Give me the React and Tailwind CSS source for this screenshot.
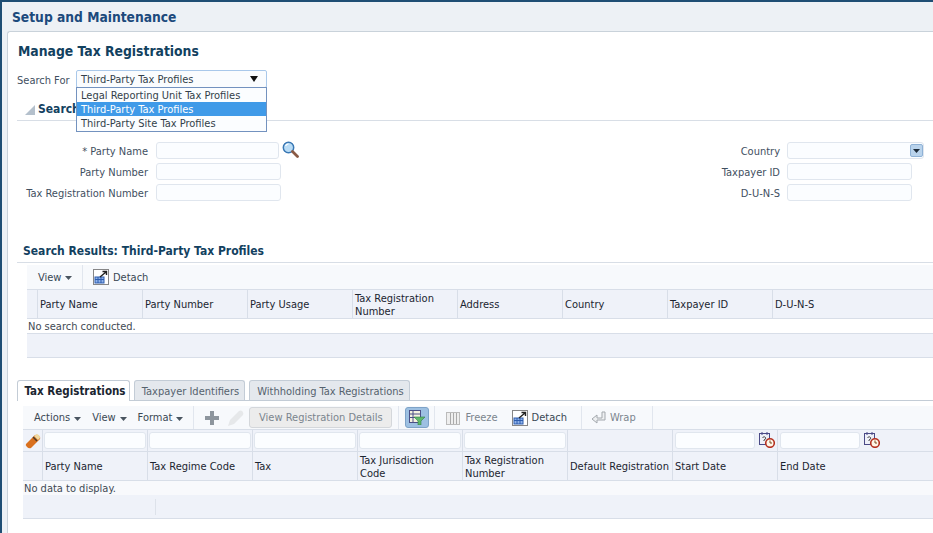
const resultColumns = ["Party Name", "Party Number", "Party Usage", "Tax Registration Number", "Address", "Country", "Taxpayer ID", "D-U-N-S"];
const registrationColumns = ["Party Name", "Tax Regime Code", "Tax", "Tax Jurisdiction Code", "Tax Registration Number", "Default Registration", "Start Date", "End Date"];
const wrappedColumns = ["Tax Registration Number", "Tax Jurisdiction Code"];

const Caret = () => (
  <svg width="7" height="4" viewBox="0 0 7 4" className="ml-[4px] mt-[2px]">
    <path d="M0 0h7L3.5 4z" fill="#4a5560" />
  </svg>
);

const Separator = () => <div className="h-[23px] w-px bg-[#e1e6ee]" />;

const DetachIcon = () => (
  <svg width="16" height="16" viewBox="0 0 16 16" className="shrink-0">
    <rect x="0.5" y="0.5" width="15" height="15" fill="#fff" stroke="#111" strokeDasharray="1 1" />
    <rect x="2" y="8" width="9" height="6" fill="#8fb2ea" stroke="#2c5cae" />
    <path d="M2 10.5h9M5 8v6M8 8v6" stroke="#2c5cae" />
    <path d="M7 8l6-5M9.5 2.5H13.5V6" fill="none" stroke="#222" strokeWidth="1.4" />
  </svg>
);

const CalendarIcon = () => (
  <svg width="16" height="16" viewBox="0 0 16 16" className="shrink-0">
    <rect x="0.5" y="1.5" width="10" height="11" fill="#eef0f8" stroke="#4a4a86" />
    <path d="M3 0v3M8 0v3" stroke="#4a4a86" />
    <path d="M3.5 5.5q2-1.5 3 0t-1.5 2.5v1" fill="none" stroke="#444" />
    <circle cx="11" cy="11" r="4.3" fill="#fff6e8" stroke="#b5301f" strokeWidth="1.6" />
    <path d="M11 8.5V11h2" fill="none" stroke="#7a4a20" />
  </svg>
);

const Input = ({ className }) => (
  <div className={`h-[17px] rounded-[3px] border border-[#e0e6ee] bg-[#fbfdff] ${className}`} />
);

const FormRow = ({ label, inputClass }) => (
  <div className="flex h-[17px] items-center">
    <div className="w-[140px] pt-[2px] text-right leading-[15px]">{label}</div>
    <Input className={`ml-[8px] ${inputClass}`} />
  </div>
);

const HeaderRow = ({ columns, lead, height }) => (
  <div className={`grid ${lead} ${height} border-y border-[#d8dee8] bg-[#eff2f9] text-[#1b2530]`}>
    <div className="border-r border-[#d8dee8]" />
    {columns.map((c, i) => (
      <div
        key={c}
        className={`flex items-center px-[2px] leading-[13px] ${wrappedColumns.includes(c) ? "pt-[2px]" : ""} ${i < columns.length - 1 ? "border-r border-[#d8dee8]" : ""}`}
      >
        <span className={wrappedColumns.includes(c) ? "max-w-[92px]" : ""}>{c}</span>
      </div>
    ))}
  </div>
);

export default function App() {
  return (
    <div className="h-[533px] w-[933px] overflow-hidden border-t-2 border-l-2 border-[#1f4e74] bg-[#edf1f5] text-[11px] text-[#3f4f5f] [font-family:'DejaVu_Sans_Condensed','DejaVu_Sans',sans-serif] [font-stretch:condensed]">
      <div className="flex h-[29px] items-center pt-[2px] pl-[10px] text-[13.7px] font-bold text-[#1c4a7c]">Setup and Maintenance</div>

      <div className="ml-[5px] h-[510px] overflow-hidden rounded-tl-[3px] border-t border-l border-[#c9d2da] bg-white">
        <h1 className="mt-[9px] h-[20px] pl-[10px] text-[13.8px] leading-[20px] font-bold text-[#12415f]">Manage Tax Registrations</h1>

        <div className="relative mt-[9px] flex h-[18px] items-center pl-[9px]">
          <span className="w-[59px] pt-[2px] leading-[15px]">Search For</span>
          <div className="flex h-[18px] w-[191px] items-center justify-between rounded-[2px] border border-[#a9c8ea] bg-[#fafcfe] pr-[8px] pl-[4px] text-[#333f4a]">
            <span className="pt-[2px] leading-[14px]">Third-Party Tax Profiles</span>
            <svg width="8" height="6" viewBox="0 0 8 6"><path d="M0 0h8L4 6z" fill="#111" /></svg>
          </div>
          <div className="absolute top-[17px] left-[68px] z-10 h-[45px] w-[191px] border border-[#7392bf] bg-[#fbfdff] text-[#333f4a]">
            <div className="h-[14px] pl-[4px] leading-[16px]">Legal Reporting Unit Tax Profiles</div>
            <div className="h-[14px] bg-[#3f9ae8] pl-[4px] leading-[16px] text-white">Third-Party Tax Profiles</div>
            <div className="h-[14px] pl-[4px] leading-[16px]">Third-Party Site Tax Profiles</div>
          </div>
        </div>

        <div className="ml-[9px] flex h-[33px] items-end border-b border-[#d8dee6] pb-[3px] pl-[8px]">
          <svg width="10" height="10" viewBox="0 0 10 10" className="mb-[2px]"><path d="M10 0v10H0z" fill="#b4c0cc" /></svg>
          <span className="ml-[3px] text-[12px] leading-[15px] font-bold text-[#12415f]">Search</span>
        </div>

        <div className="mt-[21px] flex h-[59px]">
          <div className="flex flex-col gap-[4px]">
            <div className="flex h-[17px] items-center">
              <div className="w-[140px] pt-[2px] text-right leading-[15px]">* Party Name</div>
              <Input className="ml-[8px] w-[123px]" />
              <svg width="17" height="17" viewBox="0 0 17 17" className="ml-[3px] -mt-[3px]">
                <circle cx="6.5" cy="6.5" r="5.2" fill="#b9dcf6" stroke="#3a78b4" strokeWidth="1.5" />
                <path d="M3.5 5q1-2 3-2" fill="none" stroke="#fff" strokeWidth="1.2" />
                <path d="M10.5 10.5l5 5" stroke="#8a5a44" strokeWidth="2.8" strokeLinecap="round" />
              </svg>
            </div>
            <FormRow label="Party Number" inputClass="w-[125px]" />
            <FormRow label="Tax Registration Number" inputClass="w-[125px]" />
          </div>
          <div className="ml-auto flex flex-col gap-[4px] pr-[9px]">
            <div className="flex h-[17px] items-center justify-end">
              <span className="pt-[2px] leading-[15px]">Country</span>
              <div className="ml-[7px] flex h-[17px] w-[137px] items-center justify-end rounded-[3px] border border-[#e0e6ee] bg-[#fbfdff]">
                <div className="flex h-[13px] w-[13px] items-center justify-center rounded-[2px] border border-[#8fb2d6] bg-[#b9d3ec]">
                  <svg width="7" height="4" viewBox="0 0 7 4"><path d="M0 0h7L3.5 4z" fill="#1c2b3a" /></svg>
                </div>
              </div>
            </div>
            <div className="flex h-[17px] items-center justify-end pr-[12px]">
              <span className="pt-[2px] leading-[15px]">Taxpayer ID</span>
              <Input className="ml-[7px] w-[125px]" />
            </div>
            <div className="flex h-[17px] items-center justify-end pr-[12px]">
              <span className="pt-[2px] leading-[15px]">D-U-N-S</span>
              <Input className="ml-[7px] w-[125px]" />
            </div>
          </div>
        </div>

        <div className="mt-[41px] ml-[9px] flex h-[21px] items-start border-b border-[#d8dee6] pt-[2px] pl-[6px] text-[12px] leading-[15px] font-bold text-[#12415f]">
          Search Results: Third-Party Tax Profiles
        </div>

        <div className="mt-[2px] ml-[19px]">
          <div className="flex h-[24px] items-center bg-[#f7f9fc] text-[#3a4854]">
            <div className="flex h-full w-[56px] items-center border-r border-[#e1e6ee] pl-[11px]">
              <span className="leading-[15px]">View</span>
              <Caret />
            </div>
            <div className="ml-[10px]"><DetachIcon /></div>
            <span className="ml-[4px] leading-[15px]">Detach</span>
          </div>
          <HeaderRow columns={resultColumns} lead="grid-cols-[11px_repeat(7,105px)_1fr]" height="h-[30px]" />
          <div className="flex h-[14px] items-center pl-[1px] text-[#3f4a54]"><span className="pt-[2px] leading-[12px]">No search conducted.</span></div>
          <div className="h-[25px] border-y border-[#d8dee8] bg-[#eff2f9]" />
        </div>

        <div className="mt-[22px] ml-[9px] flex h-[21px] items-end gap-[4px] border-b border-[#c3ccd6]">
          <div className="relative top-px flex h-[21px] w-[113px] items-center justify-center rounded-t-[3px] border border-b-0 border-[#c3ccd6] bg-white pt-px pl-[3px] text-[11.5px] leading-[15px] font-bold text-[#1b2530]">Tax Registrations</div>
          <div className="flex h-[20px] w-[111px] items-center justify-center rounded-t-[3px] border border-b-0 border-[#c3ccd6] bg-[#e4e8ed] pt-[2px] pl-[2px] leading-[15px] text-[#55626e]">Taxpayer Identifiers</div>
          <div className="flex h-[20px] w-[161px] items-center justify-center rounded-t-[3px] border border-b-0 border-[#c3ccd6] bg-[#e4e8ed] pt-[2px] pl-[2px] leading-[15px] text-[#55626e]">Withholding Tax Registrations</div>
        </div>

        <div className="mt-[5px] ml-[15px]">
          <div className="flex h-[23px] items-center bg-[#f7f9fc] text-[#3a4854]">
            <span className="ml-[11px] flex items-center leading-[15px]">Actions<Caret /></span>
            <span className="ml-[11px] flex items-center leading-[15px]">View<Caret /></span>
            <span className="ml-[11px] flex items-center leading-[15px]">Format<Caret /></span>
            <div className="ml-[10px]"><Separator /></div>
            <svg width="14" height="14" viewBox="0 0 14 14" className="ml-[11px]"><path d="M5 0h4v5h5v4H9v5H5V9H0V5h5z" fill="#8d959d" /></svg>
            <svg width="16" height="16" viewBox="0 0 16 16" className="ml-[9px]"><path d="M0 16l2-6 9-9q2-1 3.5.5t.5 3.5l-9 9z" fill="#e6e8ea" /></svg>
            <div className="ml-[5px] flex h-[21px] w-[143px] items-center justify-center rounded-[3px] border border-[#d4d7db] bg-[#ececec] leading-[15px] text-[#7b858e]">View Registration Details</div>
            <div className="ml-[6px]"><Separator /></div>
            <div className="ml-[6px] flex h-[21px] w-[24px] items-center justify-center rounded-[3px] border border-[#7ea3c8] bg-[#9dc0e2]">
              <svg width="16" height="15" viewBox="0 0 16 15">
                <rect x="0.5" y="0.5" width="11" height="12" fill="#f4f1e0" stroke="#4b4f86" />
                <path d="M0 4h11M0 7.5h11M4 1v11" stroke="#4b4f86" />
                <path d="M5 7h11l-4 4v4h-3v-4z" fill="#5fb86a" stroke="#2f7d46" strokeWidth="0.6" />
              </svg>
            </div>
            <div className="ml-[5px]"><Separator /></div>
            <svg width="14" height="14" viewBox="0 0 14 14" className="ml-[11px]">
              <rect x="0.5" y="1.5" width="13" height="12" fill="#eee" stroke="#bbb" />
              <path d="M4.5 2v11M7.5 2v11M10.5 2v11" stroke="#aaa" />
            </svg>
            <span className="ml-[5px] leading-[15px] text-[#7b858e]">Freeze</span>
            <div className="ml-[14px]"><DetachIcon /></div>
            <span className="ml-[4px] leading-[15px]">Detach</span>
            <div className="ml-[14px]"><Separator /></div>
            <svg width="15" height="14" viewBox="0 0 15 14" className="ml-[9px]">
              <path d="M11 1h3v8H6v3L1 8l5-4v3h5z" fill="#eef0f2" stroke="#a3a8ad" />
            </svg>
            <span className="ml-[4px] leading-[15px] text-[#7b858e]">Wrap</span>
            <div className="ml-[16px]"><Separator /></div>
          </div>

          <div className="grid h-[22px] grid-cols-[20px_repeat(7,105px)_1fr] border-t border-[#d8dee8] bg-[#eff2f9]">
            <div className="flex items-center justify-center border-r border-[#d8dee8]">
              <svg width="16" height="16" viewBox="0 0 16 16">
                <path d="M1 11L10 2q2-1 4 1t1 3l-9 9q-2 1-4-1t-1-3z" fill="#d9701e" />
                <path d="M9 3l4 4 2-2q0-3-3-4z" fill="#f0d9a0" />
                <path d="M8 4l4 4" stroke="#4a3a2a" strokeWidth="1.4" />
              </svg>
            </div>
            {[0, 1, 2, 3, 4].map((i) => (
              <div key={i} className="flex items-center justify-center border-r border-[#d8dee8]">
                <Input className="w-[102px]" />
              </div>
            ))}
            <div className="border-r border-[#d8dee8]" />
            <div className="flex items-center border-r border-[#d8dee8] pl-[2px]">
              <Input className="w-[80px]" />
              <div className="ml-[4px] -mt-[2px]"><CalendarIcon /></div>
            </div>
            <div className="flex items-center pl-[2px]">
              <Input className="w-[80px]" />
              <div className="ml-[4px] -mt-[2px]"><CalendarIcon /></div>
            </div>
          </div>

          <HeaderRow columns={registrationColumns} lead="grid-cols-[20px_repeat(7,105px)_1fr]" height="h-[30px]" />
          <div className="flex h-[14px] items-center bg-[#f8f9fc] pl-px text-[#3f4a54]"><span className="pt-[2px] leading-[12px]">No data to display.</span></div>
          <div className="flex h-[24px] items-center border-b border-[#d8dee8] bg-[#eff2f9]">
            <div className="ml-[132px] h-[16px] w-px bg-[#dde2ea]" />
          </div>
        </div>
      </div>
    </div>
  );
}
